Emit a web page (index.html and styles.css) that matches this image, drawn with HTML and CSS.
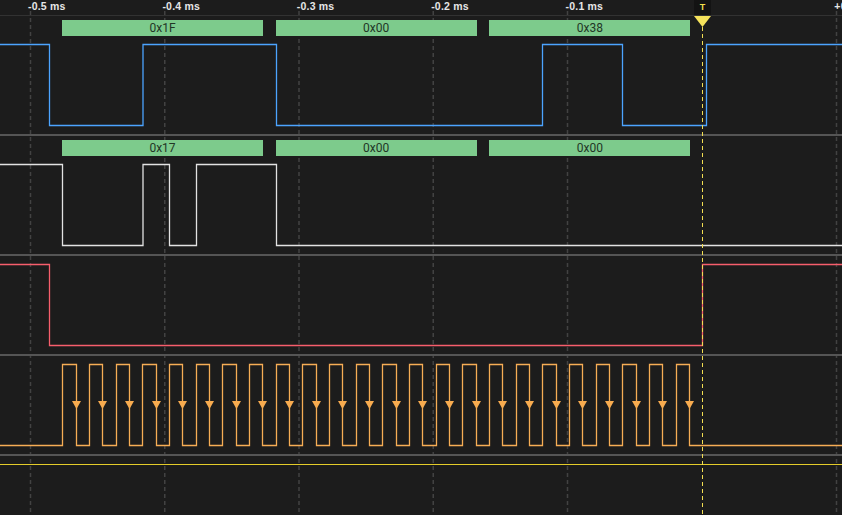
FILE: index.html
```html
<!DOCTYPE html>
<html>
<head>
<meta charset="utf-8">
<link rel="stylesheet" href="styles.css">
</head>
<body>
<div class="scope">
  <svg class="grid" width="842" height="515" viewBox="0 0 842 515">
    <g class="gridlines">
      <line x1="30.5" y1="11" x2="30.5" y2="515"/>
      <line x1="164.75" y1="11" x2="164.75" y2="515"/>
      <line x1="299" y1="11" x2="299" y2="515"/>
      <line x1="433.25" y1="11" x2="433.25" y2="515"/>
      <line x1="567.5" y1="11" x2="567.5" y2="515"/>
      <line x1="836.5" y1="11" x2="836.5" y2="515"/>
    </g>
  </svg>

  <div class="ruler">
    <span class="tick">-0.5 ms</span>
    <span class="tick">-0.4 ms</span>
    <span class="tick">-0.3 ms</span>
    <span class="tick">-0.2 ms</span>
    <span class="tick">-0.1 ms</span>
    <span class="tick"></span>
    <span class="tick">+0.1 ms</span>
  </div>

  <div class="channel">
    <div class="lane">
      <div class="byte">0x1F</div>
      <div class="byte">0x00</div>
      <div class="byte">0x38</div>
    </div>
    <svg class="trace" width="842" height="98" viewBox="0 0 842 98">
      <path class="sig blue" d="M0 8.5H49.5V89.5H143V8.5H276.5V89.5H542.5V8.5H622.5V89.5H706.5V8.5H842"/>
    </svg>
  </div>

  <div class="channel">
    <div class="lane">
      <div class="byte">0x17</div>
      <div class="byte">0x00</div>
      <div class="byte">0x00</div>
    </div>
    <svg class="trace" width="842" height="98" viewBox="0 0 842 98">
      <path class="sig white" d="M0 8.5H62.5V89.5H143V8.5H169.5V89.5H196.5V8.5H276.5V89.5H842"/>
    </svg>
  </div>

  <div class="channel">
    <svg class="trace" width="842" height="98" viewBox="0 0 842 98">
      <path class="sig red" d="M0 8.5H49.5V89.5H702.5V8.5H842"/>
    </svg>
  </div>

  <div class="channel">
    <svg class="trace" width="842" height="98" viewBox="0 0 842 98">
      <path class="sig orange" d="M0 89.5H62.5V8.5H76.5V89.5H89.5V8.5H102.5V89.5H116.5V8.5H129.5V89.5H142.5V8.5H156.5V89.5H169.5V8.5H182.5V89.5H196.5V8.5H209.5V89.5H222.5V8.5H236.5V89.5H249.5V8.5H262.5V89.5H276.5V8.5H289.5V89.5H302.5V8.5H316.5V89.5H329.5V8.5H342.5V89.5H356.5V8.5H369.5V89.5H382.5V8.5H396.5V89.5H409.5V8.5H422.5V89.5H436.5V8.5H449.5V89.5H462.5V8.5H476.5V89.5H489.5V8.5H502.5V89.5H516.5V8.5H529.5V89.5H542.5V8.5H556.5V89.5H569.5V8.5H582.5V89.5H596.5V8.5H609.5V89.5H622.5V8.5H636.5V89.5H649.5V8.5H662.5V89.5H676.5V8.5H689.5V89.5H842"/>
      <path class="edges" d="M72 45h9l-4.5 8zM98 45h9l-4.5 8zM125 45h9l-4.5 8zM152 45h9l-4.5 8zM178 45h9l-4.5 8zM205 45h9l-4.5 8zM232 45h9l-4.5 8zM258 45h9l-4.5 8zM285 45h9l-4.5 8zM312 45h9l-4.5 8zM338 45h9l-4.5 8zM365 45h9l-4.5 8zM392 45h9l-4.5 8zM418 45h9l-4.5 8zM445 45h9l-4.5 8zM472 45h9l-4.5 8zM498 45h9l-4.5 8zM525 45h9l-4.5 8zM552 45h9l-4.5 8zM578 45h9l-4.5 8zM605 45h9l-4.5 8zM632 45h9l-4.5 8zM658 45h9l-4.5 8zM685 45h9l-4.5 8z"/>
    </svg>
  </div>

  <div class="trigger-level"></div>

  <div class="trigger">
    <div class="trigger-tag">T</div>
    <svg class="trigger-mark" width="17" height="500" viewBox="0 0 17 500">
      <path class="trigger-arrow" d="M0 1H17L8.5 12Z"/>
      <line class="trigger-line" x1="8.5" y1="12" x2="8.5" y2="500"/>
    </svg>
  </div>
</div>
</body>
</html>
```

FILE: styles.css
```css
html, body {
  margin: 0;
  padding: 0;
  background: #1c1c1c;
}

.scope {
  position: relative;
  z-index: 0;
  width: 842px;
  height: 515px;
  overflow: hidden;
  background: #1c1c1c;
  font-family: "Liberation Sans", Arial, sans-serif;
}

.grid {
  position: absolute;
  top: 0;
  left: 0;
  z-index: -1;
}

.gridlines line {
  stroke: #424242;
  stroke-width: 1.5;
  stroke-dasharray: 4 3;
}

.ruler {
  display: grid;
  grid-template-columns: repeat(7, 134.4px);
  padding-left: 28px;
  height: 15px;
  border-bottom: 1px solid #323232;
  white-space: nowrap;
}

.tick {
  font-size: 10.5px;
  font-weight: bold;
  line-height: 12px;
  color: #e6e6e6;
  letter-spacing: 0.2px;
}

.channel {
  display: flex;
  flex-direction: column;
  border-bottom: 2px solid #555555;
}

.lane {
  display: flex;
  gap: 12.67px;
  padding: 4px 0 0 62px;
  height: 16px;
}

.byte {
  width: 201px;
  flex: none;
  height: 16px;
  background: #7dcb8c;
  color: #223626;
  font-family: Roboto, "Liberation Sans", sans-serif;
  font-size: 12px;
  line-height: 16px;
  text-align: center;
}

.trace {
  display: block;
}

.sig {
  fill: none;
  stroke-width: 1.3;
}

.blue { stroke: #4ca4ff; }
.white { stroke: #e2e2e2; }
.red { stroke: #f75e6c; }
.orange { stroke: #f6ad55; }

.edges {
  fill: #f7ab4f;
}

.trigger-level {
  margin-top: 8px;
  height: 1px;
  background: #e4cc2a;
}

.trigger {
  position: absolute;
  top: 0;
  left: 694px;
  width: 17px;
}

.trigger-tag {
  height: 15px;
  background: #131313;
  color: #f3de4c;
  font-size: 9px;
  font-weight: bold;
  line-height: 15px;
  text-align: center;
}

.trigger-mark {
  display: block;
}

.trigger-arrow {
  fill: #f6e35c;
}

.trigger-line {
  stroke: #f2de52;
  stroke-width: 1;
  stroke-dasharray: 4 3;
}
```
